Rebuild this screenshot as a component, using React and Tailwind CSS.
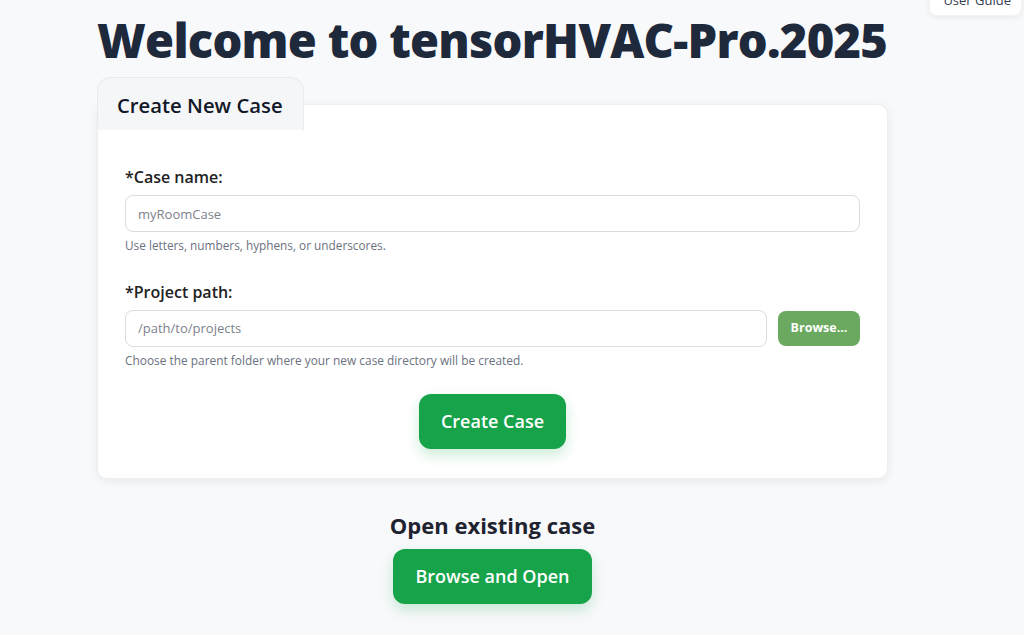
import React from "react";

const font = { fontFamily: '"Open Sans", "Noto Sans", sans-serif' };

const App = () => {
  return (
    <div className="min-h-screen bg-[#f8f9fb] relative overflow-hidden" style={font}>
      {/* User guide button, partly scrolled out */}
      <button className="absolute top-[-22px] right-[2px] bg-white text-[13px] text-gray-700 pl-[13px] pr-[10px] pt-[12px] pb-[4px] rounded-lg shadow-[0_1px_6px_rgba(0,0,0,0.08)] border border-gray-100">
        User Guide
      </button>

      <div className="w-[791px] ml-[97px] pt-[12px]">
        <h1 className="text-[47px] leading-[56px] font-extrabold text-[#1e293b] tracking-[-0.75px] whitespace-nowrap">
          Welcome to tensorHVAC-Pro.2025
        </h1>

        <div className="mt-[9px]">
          <div className="relative z-10 inline-block bg-[#f5f6f8] border border-b-0 border-[#e8eaee] rounded-t-[14px] pl-[19px] pr-[20px] pt-[12px] h-[53px]">
            <span className="text-[20.3px] font-semibold text-[#111827]">Create New Case</span>
          </div>

          <div className="-mt-[26px] bg-white rounded-[10px] shadow-[0_2px_10px_rgba(0,0,0,0.07)] border border-[#eceef1] px-[27px] pt-[60px] pb-[29px]">
            <label className="block text-[16px] font-semibold text-[#222] mb-[6px]">*Case name:</label>
            <input
              className="w-full h-[37px] border border-[#d9dce1] rounded-lg px-[12px] text-[13px] text-gray-700 placeholder:text-[#7d828b] outline-none"
              placeholder="myRoomCase"
            />
            <p className="text-[11.8px] text-[#6b7280] mt-[5px]">Use letters, numbers, hyphens, or underscores.</p>

            <label className="block text-[16px] font-semibold text-[#222] mt-[25px] mb-[6px]">*Project path:</label>
            <div className="flex items-center gap-[11px]">
              <input
                className="flex-1 h-[37px] border border-[#d9dce1] rounded-lg px-[12px] text-[13px] text-gray-700 placeholder:text-[#7d828b] outline-none"
                placeholder="/path/to/projects"
              />
              <button className="w-[82px] h-[35px] bg-[#6aa95f] text-white text-[12.5px] font-bold rounded-lg">
                Browse...
              </button>
            </div>
            <p className="text-[11.9px] text-[#6b7280] mt-[5px]">
              Choose the parent folder where your new case directory will be created.
            </p>

            <div className="flex justify-center mt-[24px]">
              <button className="w-[147px] h-[55px] bg-[#16a34a] text-white text-[18px] font-semibold rounded-xl shadow-[0_6px_14px_rgba(22,163,74,0.22)]">
                Create Case
              </button>
            </div>
          </div>
        </div>

        <div className="flex flex-col items-center mt-[31px]">
          <h2 className="text-[22px] font-bold text-[#1f2330] leading-[30px]">Open existing case</h2>
          <button className="mt-[9px] w-[199px] h-[55px] bg-[#16a34a] text-white text-[18px] font-semibold rounded-xl shadow-[0_6px_14px_rgba(22,163,74,0.22)]">
            Browse and Open
          </button>
        </div>
      </div>
    </div>
  );
};

export default App;
